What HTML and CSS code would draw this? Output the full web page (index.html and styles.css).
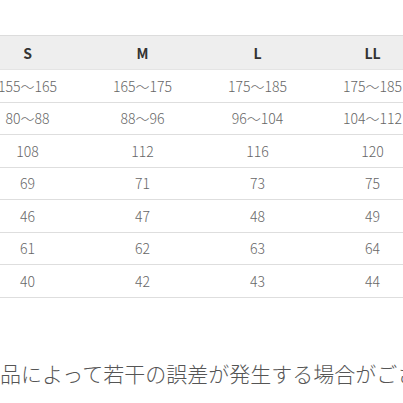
FILE: index.html
```html
<!DOCTYPE html>
<html lang="ja">
<head>
<meta charset="utf-8">
<link rel="stylesheet" href="styles.css">
</head>
<body>
<div class="page">
  <table class="size-table">
    <thead>
      <tr><th>S</th><th>M</th><th>L</th><th>LL</th></tr>
    </thead>
    <tbody>
      <tr><td>155〜165</td><td>165〜175</td><td>175〜185</td><td>175〜185</td></tr>
      <tr><td>80〜88</td><td>88〜96</td><td>96〜104</td><td>104〜112</td></tr>
      <tr><td>108</td><td>112</td><td>116</td><td>120</td></tr>
      <tr><td>69</td><td>71</td><td>73</td><td>75</td></tr>
      <tr><td>46</td><td>47</td><td>48</td><td>49</td></tr>
      <tr><td>61</td><td>62</td><td>63</td><td>64</td></tr>
      <tr><td>40</td><td>42</td><td>43</td><td>44</td></tr>
    </tbody>
  </table>
  <p class="note">※商品によって若干の誤差が発生する場合がございます。</p>
</div>
</body>
</html>
```
FILE: styles.css
```css
html, body {
  margin: 0;
  padding: 0;
  background: #ffffff;
  overflow: hidden;
}
body {
  width: 403px;
  height: 403px;
  font-family: "Noto Sans CJK JP", "Noto Sans", sans-serif;
}
.page {
  padding-top: 35px;
}
.size-table {
  border-collapse: collapse;
  table-layout: fixed;
  width: 460px;
  margin-left: -30px;
}
.size-table th,
.size-table td {
  width: 115px;
  text-align: center;
  padding: 0;
  white-space: nowrap;
}
.size-table th {
  height: 33px;
  background: #eeeeee;
  border-top: 1px solid #dcdcdc;
  border-bottom: 1px solid #e4e4e4;
  font-size: 14px;
  font-weight: 700;
  color: #333333;
}
.size-table td {
  height: 31.5px;
  border-bottom: 1px solid #dedede;
  font-size: 14px;
  font-weight: 300;
  color: #666666;
}
.note {
  margin: 65px 0 0 -42px;
  font-size: 21px;
  font-weight: 300;
  color: #555555;
  white-space: nowrap;
  line-height: 1;
}
```
